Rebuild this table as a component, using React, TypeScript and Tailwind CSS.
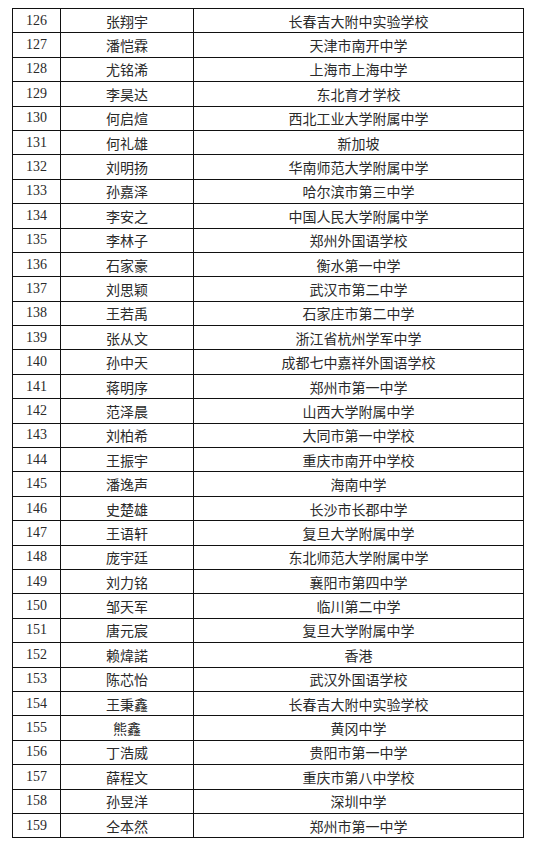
const rows: [number, string, string][] = [
  [126, "张翔宇", "长春吉大附中实验学校"],
  [127, "潘恺霖", "天津市南开中学"],
  [128, "尤铭浠", "上海市上海中学"],
  [129, "李昊达", "东北育才学校"],
  [130, "何启煊", "西北工业大学附属中学"],
  [131, "何礼雄", "新加坡"],
  [132, "刘明扬", "华南师范大学附属中学"],
  [133, "孙嘉泽", "哈尔滨市第三中学"],
  [134, "李安之", "中国人民大学附属中学"],
  [135, "李林子", "郑州外国语学校"],
  [136, "石家豪", "衡水第一中学"],
  [137, "刘思颖", "武汉市第二中学"],
  [138, "王若禹", "石家庄市第二中学"],
  [139, "张从文", "浙江省杭州学军中学"],
  [140, "孙中天", "成都七中嘉祥外国语学校"],
  [141, "蒋明序", "郑州市第一中学"],
  [142, "范泽晨", "山西大学附属中学"],
  [143, "刘柏希", "大同市第一中学校"],
  [144, "王振宇", "重庆市南开中学校"],
  [145, "潘逸声", "海南中学"],
  [146, "史楚雄", "长沙市长郡中学"],
  [147, "王语轩", "复旦大学附属中学"],
  [148, "庞宇廷", "东北师范大学附属中学"],
  [149, "刘力铭", "襄阳市第四中学"],
  [150, "邹天军", "临川第二中学"],
  [151, "唐元宸", "复旦大学附属中学"],
  [152, "赖煒諾", "香港"],
  [153, "陈芯怡", "武汉外国语学校"],
  [154, "王秉鑫", "长春吉大附中实验学校"],
  [155, "熊鑫", "黄冈中学"],
  [156, "丁浩威", "贵阳市第一中学"],
  [157, "薛程文", "重庆市第八中学校"],
  [158, "孙昱洋", "深圳中学"],
  [159, "仝本然", "郑州市第一中学"],
];

export default function App() {
  return (
    <div className="w-[533px] h-[844px] bg-white pt-[8px] pl-[12px]">
      <table className="w-[512px] border-collapse table-fixed text-[#2a2a2a]">
        <colgroup>
          <col className="w-[48px]" />
          <col className="w-[133px]" />
          <col />
        </colgroup>
        <tbody>
          {rows.map(([no, name, school]) => (
            <tr key={no} className="h-[24.4px]">
              <td className="border border-[#111] p-0 text-center text-[14px] leading-none font-['Liberation_Serif']">{no}</td>
              <td className="border border-[#111] p-0 text-center text-[14px] leading-none font-['Noto_Sans_CJK_SC']">{name}</td>
              <td className="border border-[#111] p-0 text-center text-[14px] leading-none font-['Noto_Sans_CJK_SC']">{school}</td>
            </tr>
          ))}
        </tbody>
      </table>
    </div>
  );
}
